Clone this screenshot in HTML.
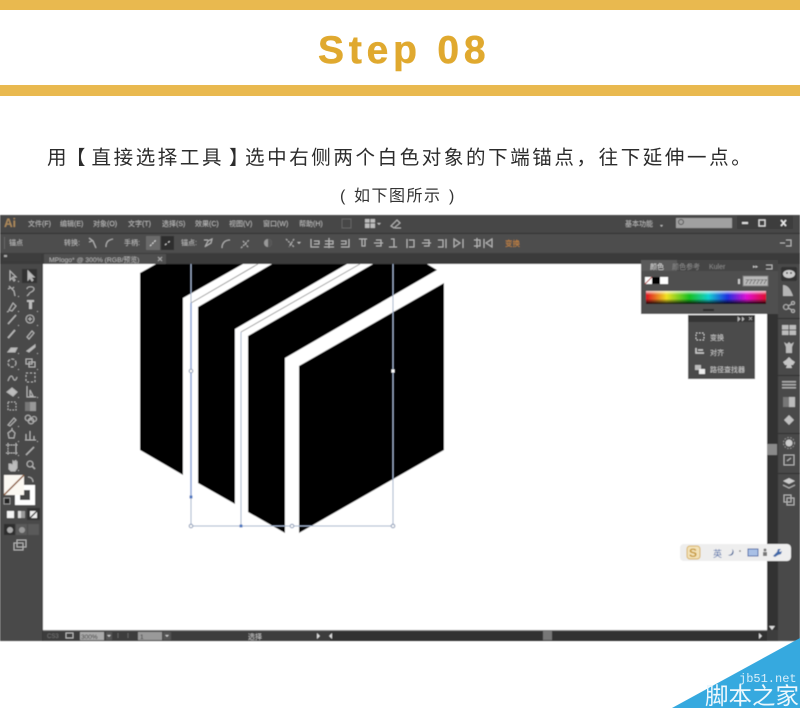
<!DOCTYPE html>
<html lang="zh"><head><meta charset="utf-8"><title>Step 08</title>
<style>
html,body{margin:0;padding:0;background:#fff}
body{width:800px;height:708px;overflow:hidden;position:relative}
svg{position:absolute;left:0;top:0;display:block}
text{font-family:"Liberation Sans","Noto Sans CJK SC",sans-serif}
.m{font-size:7px;fill:#bdbdbd}
.ic{fill:none;stroke:#b4b4b4;stroke-width:1.1}
.if{fill:#bdbdbd}
.ui{filter:url(#b)}
.h{font-size:19.5px;letter-spacing:2.6px;fill:#2c2c2c}
.s{font-size:16px;letter-spacing:1.5px;fill:#333}
</style></head><body>
<svg width="800" height="708" viewBox="0 0 800 708" xmlns="http://www.w3.org/2000/svg">
<defs>
<filter id="b" x="-2%" y="-2%" width="104%" height="104%"><feGaussianBlur stdDeviation="0.45"/></filter>
<linearGradient id="sp" x1="0" x2="1" y1="0" y2="0">
<stop offset="0" stop-color="#e01020"/><stop offset=".17" stop-color="#f0e020"/><stop offset=".36" stop-color="#18c020"/><stop offset=".52" stop-color="#10d0d0"/><stop offset=".68" stop-color="#2030e0"/><stop offset=".84" stop-color="#e010d0"/><stop offset="1" stop-color="#e01030"/>
</linearGradient>
<linearGradient id="sv" x1="0" x2="0" y1="0" y2="1">
<stop offset="0" stop-color="#fff" stop-opacity=".8"/><stop offset=".3" stop-color="#fff" stop-opacity="0"/><stop offset=".6" stop-color="#000" stop-opacity="0"/><stop offset="1" stop-color="#000" stop-opacity=".9"/>
</linearGradient>
</defs>

<!-- header -->
<rect x="0" y="0" width="800" height="10" fill="#e9b94f"/>
<rect x="0" y="85" width="800" height="11" fill="#e9b94f"/>
<text x="318" y="63" font-size="39" font-weight="700" letter-spacing="4.8" fill="#e0a92f" stroke="#e0a92f" stroke-width=".5">Step 08</text>
<text class="h" x="47" y="164">用</text>
<text class="h" x="66" y="164">【</text>
<text class="h" x="91.500" y="164">直接选择工具</text>
<text class="h" x="229" y="164">】</text>
<text class="h" x="245" y="164">选中右侧两个白色对象的下端锚点，往下延伸一点。</text>
<text class="s" x="340" y="201">(</text>
<text class="s" x="354" y="201">如下图所示</text>
<text class="s" x="449" y="201">)</text>

<g class="ui">
<!-- app chrome -->
<rect x="0" y="215" width="800" height="426" fill="#4a4a4a"/>
<rect x="0" y="215" width="800" height="18" fill="#474747"/>
<rect x="0" y="233" width="800" height="1" fill="#333"/>
<rect x="0" y="234" width="800" height="19" fill="#4d4d4d"/>
<rect x="0" y="253" width="800" height="11" fill="#3a3a3a"/>
<rect x="44" y="254" width="122" height="10" fill="#505050"/>

<!-- title bar -->
<text x="4" y="227" font-size="12" font-weight="700" fill="#ad8a5c">Ai</text>
<text class="m" x="28" y="226">文件(F)</text><text class="m" x="60" y="226">编辑(E)</text><text class="m" x="93" y="226">对象(O)</text><text class="m" x="128" y="226">文字(T)</text><text class="m" x="162" y="226">选择(S)</text><text class="m" x="195" y="226">效果(C)</text><text class="m" x="229" y="226">视图(V)</text><text class="m" x="263" y="226">窗口(W)</text><text class="m" x="299" y="226">帮助(H)</text>
<rect x="342" y="219" width="9" height="9" fill="none" stroke="#666"/>
<rect x="365" y="219" width="10" height="9" fill="#bbb"/><path d="M370 219v9M365 223h10" stroke="#444"/>
<path d="M377 223h4l-2 2z" fill="#bbb"/>
<path class="ic" d="M391 226l6-6 3 3-6 5zM395 228h6"/>
<text class="m" x="625" y="226">基本功能</text><path d="M660 225h3l-1.500 2z" fill="#bbb"/>
<rect x="676" y="218" width="56" height="10" fill="#a0a0a0"/><circle cx="681" cy="222" r="2.500" fill="none" stroke="#555"/>
<rect x="737" y="216" width="56" height="13" fill="#3c3c3c"/>
<rect x="742" y="222" width="6" height="2" fill="#ddd"/>
<rect x="759" y="220" width="6" height="6" fill="none" stroke="#ddd" stroke-width="1.300"/>
<path d="M781 220l5 6M786 220l-5 6" stroke="#eee" stroke-width="1.500"/>

<!-- control bar -->
<rect x="4" y="237" width="1" height="12" fill="#666"/>
<text class="m" x="9" y="245">锚点</text>
<text class="m" x="64" y="245">转换:</text>
<path class="ic" d="M89 238l4 3 3 7M92 241l-3 1"/><path class="ic" d="M106 247c0-5 2-7 7-8"/>
<text class="m" x="124" y="245">手柄:</text>
<rect x="146" y="236" width="14" height="14" fill="#6b6b6b"/><rect x="161" y="236" width="13" height="14" fill="#2d2d2d"/>
<path d="M150 246l6-6" stroke="#ddd" stroke-dasharray="2 1"/><path d="M165 245l5-4" stroke="#ddd" stroke-dasharray="2 2"/>
<text class="m" x="181" y="245">锚点:</text>
<path class="ic" d="M205 247l3-6 4-2-1 4-5 3M204 240h4"/><path class="ic" d="M222 248c0-5 3-8 8-8"/><path class="ic" d="M241 248l8-8M243 241l5 6" stroke-dasharray="2 1"/>
<circle cx="268" cy="243" r="4" fill="#999"/><path d="M268 239a4 4 0 0 1 0 8z" fill="#555"/>
<path class="ic" d="M286 239l8 8M294 239l-5 8" stroke-dasharray="2 1"/><path d="M297 242h4l-2 2z" fill="#bbb"/>
<g class="ic">
<path d="M311 239v8h8M314 241h5v3h-5"/><path d="M329 238v10M325 241h8v3h-8M324 247h10"/><path d="M349 239v8h-8M341 241h5v3h-5"/>
<path d="M359 239h8M362 239v7h3v-7"/><path d="M374 243h9M376 240h5v6h-5"/><path d="M389 247h8M391 239h3v8"/>
<path d="M407 239v9M409 240h5v7h-5"/><path d="M422 243h9M424 240h5v6h-5"/><path d="M446 239v9M438 240h5v7h-5"/>
<path d="M454 239l6 4-6 4zM463 239v9"/><path d="M477 238v10M474 240h6v6h-6"/><path d="M492 239l-6 4 6 4zM484 239v9"/>
</g>
<text x="505" y="246" font-size="7.500" fill="#d08a3c">变换</text>
<path class="ic" d="M780 243h5M786 240h5v6h-5"/>

<!-- tab -->
<text x="49" y="262" font-size="6.800" fill="#b8b8b8">MPlogo* @ 300% (RGB/预览)</text>
<path d="M158 257l4 4M162 257l-4 4" stroke="#aaa"/>
<rect x="3" y="254" width="38" height="7" fill="#3c3c3c"/><rect x="4" y="255" width="3" height="2" fill="#aaa"/>

<!-- canvas -->
<rect x="43" y="264" width="724" height="366" fill="#fff"/>
<polygon points="140,273 156,264 243,264 183,298 183,475 140,450" fill="#000"/>
<polygon points="198,307 272,264 347,264 235,329 235,504 198,483" fill="#000"/>
<polygon points="248,336 373,264 427,264 437,270 285,358 285,533 248,512" fill="#000"/>
<polygon points="299,366 444,283 444,450 299,533" fill="#000"/>
<g fill="none" stroke-width="1">
<path d="M191 303L258 264M241 332L360 264" stroke="#9a9a9a"/>
<path d="M191 264V526M241 332V526M191 526H393M393 264V526" stroke="#9fb0cc"/>
<path d="M191 303V497" stroke="#6f93cf" stroke-width="1.300"/>
</g>
<g fill="#fff" stroke="#8a9ab5"><circle cx="191" cy="371" r="1.800"/><circle cx="191" cy="526" r="1.800"/><circle cx="292" cy="526" r="1.800"/><circle cx="393" cy="526" r="1.800"/></g>
<rect x="189.500" y="495.500" width="3" height="3" fill="#4c78c0"/><rect x="239.500" y="524.500" width="3" height="3" fill="#4c78c0"/><rect x="391.500" y="369.500" width="3" height="3" fill="#fff"/>

<!-- left tools -->
<rect x="0" y="264" width="43" height="366" fill="#4a4a4a"/>
<rect x="42" y="264" width="1" height="377" fill="#383838"/>
<rect x="22" y="269" width="15" height="14" fill="#333"/>
<g class="ic" stroke-width="1.100">
<path d="M10 271v9l2-2 2 3 1-1-2-3h3z"/>
<path class="if" d="M28 271v9l2-2 2 3 1-1-2-3h3z"/>
<path d="M9 286l5 5 1 5M14 287l-2 2M8 289l2-1"/><path d="M27 289c0-3 7-3 7 0s-5 3-5 5l-2 2"/>
<path d="M9 310l4-7 3 3-4 5zM9 311l-2 1"/>
<path class="if" d="M27 300h7v2h-2v7h-3v-7h-2z" stroke="none"/>
<path d="M8 324l8-9" stroke-width="1.500"/><circle cx="30" cy="319" r="4"/><path d="M30 317v4M28 319h4"/>
<path d="M8 338l7-8" stroke-width="1.800"/><path d="M27 337l5-6 2 2-5 6z" /><path d="M8 352l3-4h6l-2 4z" class="if"/><path d="M27 351l8-6v2l-6 5z" class="if"/>
<circle cx="12" cy="363" r="4" stroke-dasharray="3 1.500"/><path d="M26 359h6v5h-6zM29 362h6v5h-6z"/>
<path d="M8 381c2-6 4-6 5-3s3 3 4-1"/><path d="M26 373h9v9h-9z" stroke-dasharray="2 2"/>
<path d="M7 392l5-4 5 4-4 4z" class="if"/><path d="M27 386v11h9M30 396v-6l3 6z"/>
<path d="M8 402h8v8H8z" stroke-dasharray="1.500 1.500"/>
</g>
<rect x="25" y="402" width="11" height="9" fill="#999"/><rect x="25" y="402" width="5" height="9" fill="#777"/>
<g class="ic" stroke-width="1.100">
<path d="M8 425l6-7 2 2-6 6z"/><circle cx="28" cy="418" r="2.800"/><circle cx="31" cy="421" r="2.800"/><circle cx="34" cy="419" r="2.500"/>
<path d="M12 430l3 3-1 5H9l-1-5zM12 428v2"/><path d="M26 440v-6M30 440v-9M34 440v-4M25 440h11"/>
<path d="M8 445h8v8H8zM6 445h12M6 453h12M8 443v12M16 443v12" stroke-dasharray="1.500 1"/><path d="M26 455l8-8" stroke-width="1.500"/>
<path class="if" d="M9 464v5l2 2h4l2-3v-6l-1 1v-2l-1 1v-1l-1 1-1-1v3l-1 1-1-1z"/><circle cx="30" cy="464" r="3"/><path d="M32 466l3 3" stroke-width="1.500"/>
</g>
<g fill="#aaa"><rect x="18" y="281" width="1" height="1"/><rect x="18" y="296" width="1" height="1"/><rect x="18" y="311" width="1" height="1"/><rect x="37" y="311" width="1" height="1"/><rect x="18" y="325" width="1" height="1"/><rect x="37" y="325" width="1" height="1"/><rect x="18" y="353" width="1" height="1"/><rect x="37" y="353" width="1" height="1"/><rect x="18" y="369" width="1" height="1"/><rect x="37" y="369" width="1" height="1"/><rect x="18" y="397" width="1" height="1"/><rect x="37" y="397" width="1" height="1"/><rect x="18" y="426" width="1" height="1"/><rect x="18" y="441" width="1" height="1"/><rect x="37" y="441" width="1" height="1"/><rect x="18" y="455" width="1" height="1"/><rect x="18" y="470" width="1" height="1"/></g>
<!-- fill / stroke -->
<rect x="15" y="485" width="20" height="20" fill="#fff"/><rect x="20" y="490" width="10" height="10" fill="#444"/>
<rect x="4" y="475" width="20" height="20" fill="#fbf8f2"/><path d="M4 495L24 475" stroke="#8a5a3a" stroke-width="1.500"/>
<path class="ic" d="M28 477c3 0 5 2 5 5" stroke-width="1"/>
<rect x="4" y="498" width="6" height="6" fill="#222" stroke="#bbb" stroke-width=".7"/>
<rect x="7" y="511" width="7" height="7" fill="#f5f5f5"/>
<rect x="18" y="511" width="7" height="7" fill="#999"/><rect x="18" y="511" width="3" height="7" fill="#ddd"/>
<rect x="27" y="508" width="13" height="12" fill="#333"/><rect x="30" y="511" width="7" height="7" fill="#eee"/><path d="M30 518l7-7" stroke="#333" stroke-width="1.300"/>
<rect x="4" y="524" width="11" height="11" fill="#2d2d2d"/><circle cx="10" cy="530" r="3" fill="#aaa"/>
<rect x="16" y="524" width="11" height="11" fill="#5a5a5a"/><circle cx="22" cy="530" r="3" fill="#999"/>
<rect x="28" y="524" width="11" height="11" fill="#5a5a5a"/>
<path class="ic" d="M17 540h9v7h-9zM14 543h9v7h-9z" stroke-width="1"/>

<!-- scrollbars -->
<rect x="767" y="264" width="11" height="377" fill="#333"/>
<rect x="767" y="444" width="10" height="11" fill="#8a8a8a"/>
<path d="M769 626h6l-3 4z" fill="#ddd"/>
<rect x="43" y="630" width="735" height="11" fill="#3c3c3c"/>
<rect x="43" y="630" width="724" height="1" fill="#777"/>
<rect x="330" y="631" width="437" height="10" fill="#333"/>
<rect x="543" y="631" width="9" height="9" fill="#777"/>
<text x="47" y="638" font-size="6" fill="#777">CS3</text>
<rect x="66" y="633" width="7" height="5" fill="none" stroke="#bbb"/>
<rect x="80" y="632" width="24" height="8" fill="#aaa"/><text x="81" y="639" font-size="6.500" fill="#333">300%</text>
<rect x="106" y="632" width="6" height="8" fill="#555"/><path d="M107 635h4l-2 2z" fill="#ccc"/>
<path d="M118 633v5M128 633v5" stroke="#666"/>
<rect x="138" y="632" width="24" height="8" fill="#999"/><text x="140" y="639" font-size="6.500" fill="#333">1</text>
<rect x="163" y="632" width="8" height="8" fill="#555"/><path d="M165 635h4l-2 2z" fill="#ccc"/>
<text x="248" y="639" font-size="7" fill="#c8c8c8">选择</text>
<path d="M317 633l3 3-3 3z" fill="#ddd"/><path d="M332 633l-3 3 3 3z" fill="#ddd"/>
<path d="M759 633l3 3-3 3z" fill="#ddd"/>

<!-- right dock -->
<rect x="778" y="264" width="22" height="377" fill="#4a4a4a"/>
<rect x="781" y="267" width="16" height="14" rx="2" fill="#333"/>
<ellipse cx="789" cy="274" rx="6" ry="4" fill="#ccc"/><circle cx="787" cy="273" r="1" fill="#555"/><circle cx="791" cy="273" r="1" fill="#555"/>
<path d="M783 296v-11c5 0 8 5 10 11z" fill="#b5b5b5"/>
<g class="ic"><circle cx="786" cy="307" r="2.500"/><circle cx="793" cy="303" r="1.500"/><circle cx="793" cy="311" r="1.500"/><path d="M788 306l4-2M788 308l4 2"/></g>
<rect x="782" y="325" width="14" height="10" fill="#bbb"/><path d="M789 325v10M782 330h14" stroke="#444"/>
<path d="M784 342l3 2 2-2 2 2 3-2-2 5v6h-6v-6z" fill="#bbb"/>
<path d="M789 357l3 3 3 2-2 3h-2l1 3h-6l1-3h-2l-2-3 3-2z" fill="#c5c5c5"/>
<g fill="#aaa"><rect x="782" y="381" width="14" height="1.500"/><rect x="782" y="384" width="14" height="1.500"/><rect x="782" y="387" width="14" height="1.500"/></g>
<rect x="783" y="397" width="12" height="10" fill="#bbb"/><rect x="783" y="397" width="6" height="10" fill="#777"/>
<path d="M789 415l5 5-5 5-5-5z" fill="#c0c0c0"/>
<circle cx="789" cy="443" r="3.500" fill="#ccc"/><circle cx="789" cy="443" r="5.500" fill="none" stroke="#999" stroke-dasharray="1.500 1.500"/>
<path class="ic" d="M784 455h10v10h-10zM787 461l4-3"/>
<path d="M789 478l6 3-6 3-6-3z" fill="#ccc"/><path d="M783 485l6 3 6-3" class="ic"/>
<path class="ic" d="M784 495h7v7h-7zM787 498h7v7h-7z"/>
<g fill="#2f2f2f"><rect x="778" y="318" width="22" height="1"/><rect x="778" y="375" width="22" height="1"/><rect x="778" y="433" width="22" height="1"/><rect x="778" y="473" width="22" height="1"/></g>

<!-- colour panel -->
<rect x="641" y="260" width="137" height="54" fill="#505050"/>
<rect x="641" y="260" width="137" height="11" fill="#454545"/>
<rect x="641" y="260" width="36" height="11" fill="#5a5a5a"/>
<text x="650" y="269" font-size="7" fill="#ddd">颜色</text>
<text x="672" y="269" font-size="7" fill="#8a8a8a">颜色参考</text>
<text x="709" y="269" font-size="7" fill="#8a8a8a">Kuler</text>
<text x="753" y="268" font-size="5" fill="#ccc">▸▸</text><path class="ic" d="M766 265h6v4h-6" stroke-width=".8"/>
<rect x="645" y="277" width="7" height="7" fill="#fff"/><path d="M645 284l7-7" stroke="#a33"/>
<rect x="652" y="277" width="8" height="7" fill="#000"/><rect x="660" y="277" width="8" height="7" fill="#fff"/>
<rect x="738" y="279" width="2" height="5" fill="#ccc"/>
<rect x="743" y="276" width="25" height="10" fill="#b8b8b8" stroke="#777"/>
<text x="745" y="284" font-size="6.500" font-style="italic" fill="#333">777777</text>
<rect x="646" y="291" width="120" height="13" fill="url(#sp)"/><rect x="646" y="291" width="120" height="13" fill="url(#sv)"/>
<rect x="703" y="309" width="11" height="2" fill="#2c2c2c"/>

<!-- small panel -->
<rect x="688" y="315" width="67" height="64" fill="#4c4c4c"/>
<rect x="688" y="315" width="67" height="7" fill="#363636"/>
<path d="M738 317l2 2-2 2zM742 317l2 2-2 2M749 317l3 3M752 317l-3 3" stroke="#bbb" fill="#bbb" stroke-width=".7"/>
<rect x="696" y="333" width="8" height="7" fill="none" stroke="#ccc" stroke-dasharray="1.500 1.500"/>
<text x="710" y="340" font-size="7" fill="#cfcfcf">变换</text>
<path d="M696 348v5h8M698 350h5" stroke="#ccc" stroke-width="1.500" fill="none"/>
<text x="710" y="355" font-size="7" fill="#cfcfcf">对齐</text>
<rect x="695" y="365" width="6" height="5" fill="#bbb"/><rect x="699" y="369" width="6" height="5" fill="#eee"/>
<text x="710" y="372" font-size="7" fill="#cfcfcf">路径查找器</text>

<!-- Sogou IME bar -->
<rect x="680" y="544" width="111" height="17" rx="4" fill="#eeeeee"/>
<rect x="687" y="546" width="13" height="13" rx="3" fill="#f3e2b8" stroke="#d8b260"/>
<text x="689" y="557" font-size="12" font-weight="700" fill="#c89b3c">S</text>
<text x="713" y="557" font-size="9" fill="#4a6aa8">英</text>
<path d="M732 549a3.500 3.500 0 0 1-4 6 4 4 0 0 0 4-6z" fill="#2f5590"/>
<circle cx="740" cy="551" r=".8" fill="#555"/>
<rect x="748" y="549" width="10" height="7" fill="#a9c0e6" stroke="#4a6aa8"/>
<circle cx="765" cy="550" r="1.500" fill="#777"/><rect x="763" y="552" width="4" height="4" fill="#777"/>
<path d="M773 556l4-4 1-3h3l-2 2 1 1 2-1-1 3-3 1-3 2z" fill="#3f69a8"/>
</g>

<!-- watermark -->
<polygon points="672,708 800,638 800,708" fill="#36a9df"/>
<text x="739" y="682" font-size="12" fill="#d8eefa" style="font-family:'Liberation Mono',monospace">jb51.net</text>
<text x="705" y="704" font-size="23.500" fill="#eef8fd" style="font-family:'WenQuanYi Zen Hei','Noto Sans CJK SC',sans-serif">脚本之家</text>
</svg>
</body></html>
